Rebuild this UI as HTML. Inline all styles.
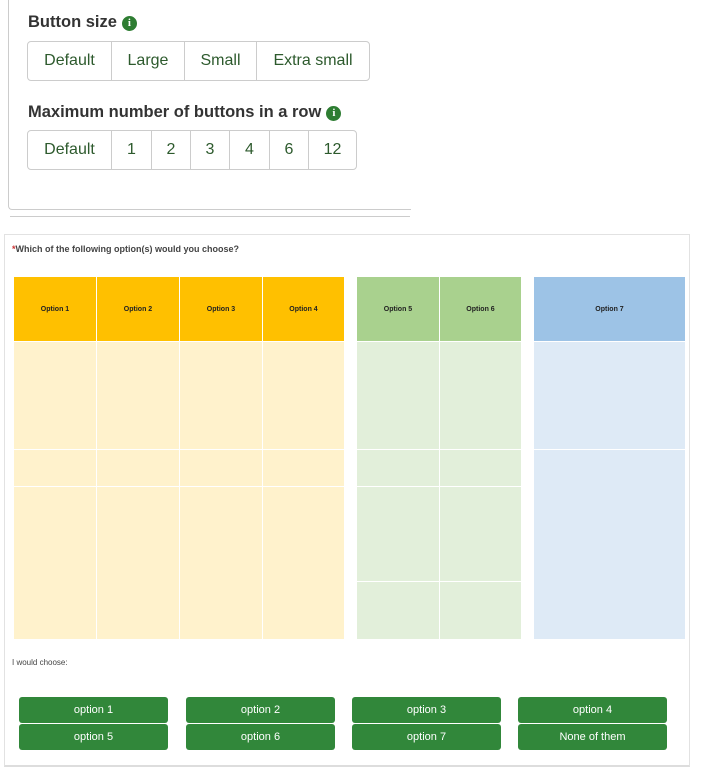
<!DOCTYPE html>
<html><head><style>
*{box-sizing:border-box;margin:0;padding:0}
body{width:721px;height:771px;background:#fff;font-family:"Liberation Sans",sans-serif;position:relative;overflow:hidden}
.a{position:absolute}
.panel{left:8px;top:-10px;width:403px;height:220px;border:1px solid #ccc;border-top:none;border-right:none;border-radius:0 0 0 4px}
.h{font-weight:bold;font-size:16px;color:#333}
.info{display:inline-block;width:15px;height:15px;border-radius:50%;background:#2e7d32;color:#fff;font:bold 11px/15px "Liberation Serif",serif;text-align:center;vertical-align:1px;margin-left:5px}
.grp{display:flex;border:1px solid #ccc;border-radius:4px;height:40px}
.grp div{border-left:1px solid #ccc;font-size:16px;color:#2d5a2d;line-height:38px;text-align:center}
.grp div:first-child{border-left:none}
.box{left:4px;top:234px;width:686px;height:533px;border:1px solid #e2e2e2;border-bottom:2px solid #ddd}
.c{position:absolute;border-right:1px solid #fff;border-bottom:1px solid #fff}
.hd{font-size:7px;font-weight:bold;color:#222;display:flex;align-items:center;justify-content:center}
.btn{position:absolute;width:149px;height:26px;background:#31873a;color:#fff;font-size:11px;text-align:center;line-height:26px;border-radius:3px}
</style></head><body>
<div class="a panel"></div>
<div class="a" style="left:10px;top:216px;width:400px;height:1px;background:#ccc"></div>
<div class="a h" style="left:28px;top:13px;font-size:16.5px">Button size<span class="info">i</span></div>
<div class="a grp" style="left:27px;top:41px;width:343px">
<div style="width:83px">Default</div><div style="width:73px">Large</div><div style="width:72px">Small</div><div style="width:113px">Extra small</div></div>
<div class="a h" style="left:28px;top:103px;font-size:16.5px">Maximum number of buttons in a row<span class="info">i</span></div>
<div class="a grp" style="left:27px;top:130px;width:330px">
<div style="width:83px">Default</div><div style="width:40px">1</div><div style="width:39px">2</div><div style="width:39px">3</div><div style="width:40px">4</div><div style="width:39px">6</div><div style="width:48px">12</div></div>
<div class="a box"></div>
<div class="a" style="left:12px;top:244px;font-size:9px;font-weight:bold;color:#444"><span style="color:#c33">*</span>Which of the following option(s) would you choose?</div>
<div id="t"></div>
<div class="a" style="left:12px;top:658px;font-size:8px;color:#444">I would choose:</div>
<div class="btn" style="left:19px;top:697px">option 1</div>
<div class="btn" style="left:186px;top:697px">option 2</div>
<div class="btn" style="left:352px;top:697px">option 3</div>
<div class="btn" style="left:518px;top:697px">option 4</div>
<div class="btn" style="left:19px;top:724px">option 5</div>
<div class="btn" style="left:186px;top:724px">option 6</div>
<div class="btn" style="left:352px;top:724px">option 7</div>
<div class="btn" style="left:518px;top:724px">None of them</div>
<script>
var h='';
function col(x,w,hc,bc,label,rows){
 h+='<div class="c hd" style="left:'+x+'px;top:277px;width:'+w+'px;height:65px;background:'+hc+'">'+label+'</div>';
 for(var i=0;i<rows.length-1;i++)h+='<div class="c" style="left:'+x+'px;top:'+rows[i]+'px;width:'+w+'px;height:'+(rows[i+1]-rows[i])+'px;background:'+bc+'"></div>';
}
var Y=[342,450,487,640],G=[342,450,487,582,640],B=[342,450,640];
col(14,83,'#FFC000','#FFF2CC','Option 1',Y);col(97,83,'#FFC000','#FFF2CC','Option 2',Y);
col(180,83,'#FFC000','#FFF2CC','Option 3',Y);col(263,82,'#FFC000','#FFF2CC','Option 4',Y);
col(357,83,'#A9D18E','#E2EFDA','Option 5',G);col(440,82,'#A9D18E','#E2EFDA','Option 6',G);
col(534,152,'#9DC3E6','#DEEAF6','Option 7',B);
document.getElementById('t').innerHTML=h;
</script>
</body></html>
